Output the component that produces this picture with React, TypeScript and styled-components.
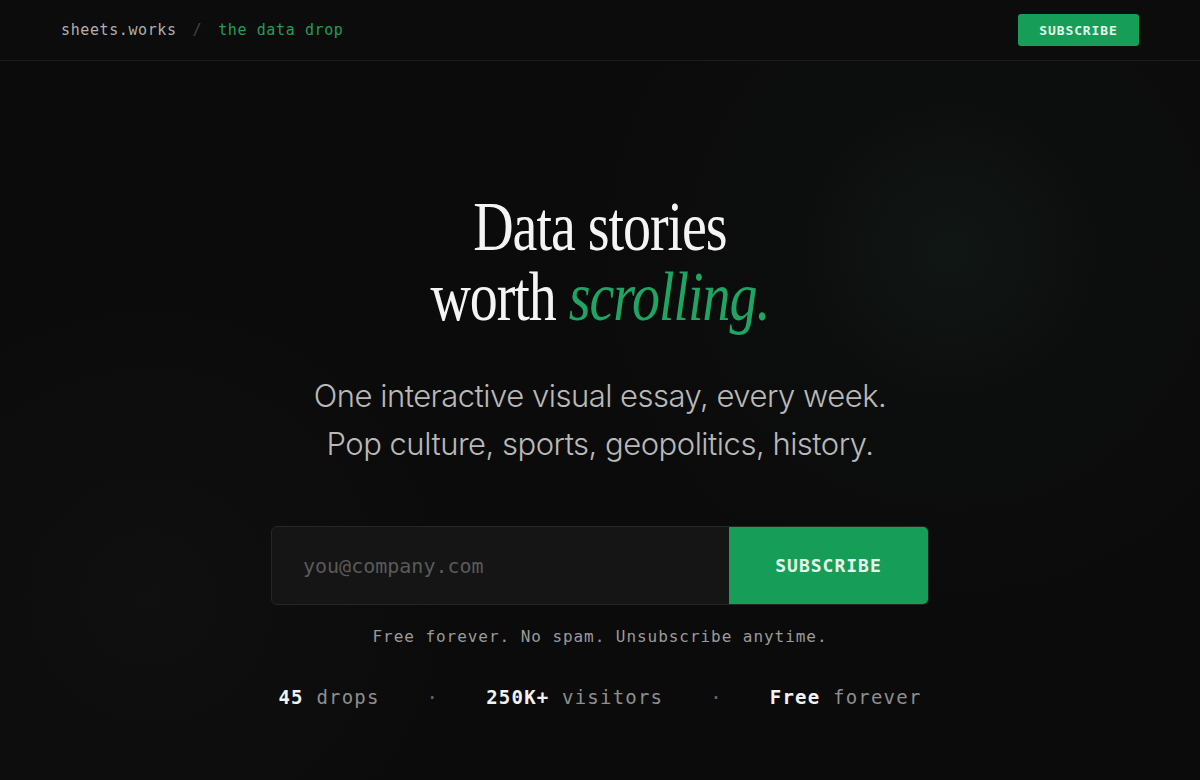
import React from 'react';
import styled, { createGlobalStyle } from 'styled-components';

const MONO = '"DejaVu Sans Mono", "Liberation Mono", monospace';
const SERIF = '"Liberation Serif", "DejaVu Serif", serif';
const SANS = 'Inter, "Noto Sans", sans-serif';
const GREEN = '#169e58';

const GlobalStyle = createGlobalStyle`
  html, body {
    margin: 0;
    padding: 0;
    background: #0b0b0b;
  }
  * { box-sizing: border-box; }
`;

const Page = styled.div`
  width: 1200px;
  height: 780px;
  overflow: hidden;
  display: flex;
  flex-direction: column;
  background:
    radial-gradient(circle at 950px 250px, rgba(28, 48, 40, 0.3) 0, rgba(20, 30, 26, 0.1) 180px, rgba(0, 0, 0, 0) 360px),
    radial-gradient(circle at 150px 600px, rgba(30, 30, 30, 0.25) 0, rgba(0, 0, 0, 0) 300px),
    #0b0b0b;
`;

const Header = styled.header`
  height: 61px;
  flex-shrink: 0;
  display: flex;
  align-items: center;
  justify-content: space-between;
  padding: 0 61px;
  border-bottom: 1px solid #1c1c1c;
  background: rgba(12, 12, 12, 0.8);
`;

const Brand = styled.div`
  display: flex;
  align-items: center;
  font-family: ${MONO};
  font-size: 15px;
  letter-spacing: 0.6px;
`;

const BrandPart = styled.span<{ $tone: 'site' | 'sep' | 'section' }>`
  color: ${p => (p.$tone === 'site' ? '#b0b0b0' : p.$tone === 'sep' ? '#444' : '#1f9e5e')};
  margin: ${p => (p.$tone === 'sep' ? '0 16px' : '0')};
`;

const SmallButton = styled.button`
  width: 121px;
  height: 32px;
  border: none;
  border-radius: 3px;
  background: ${GREEN};
  color: #e6f7ec;
  font-family: ${MONO};
  font-size: 13px;
  font-weight: 700;
  letter-spacing: 0.9px;
  cursor: pointer;
`;

const Hero = styled.main`
  flex: 1;
  display: flex;
  flex-direction: column;
  align-items: center;
  padding-top: 131px;
`;

const Headline = styled.h1`
  margin: 0;
  font-family: ${SERIF};
  font-weight: 400;
  font-size: 70px;
  line-height: 70px;
  letter-spacing: -1.3px;
  color: #f4f4f4;
  text-align: center;
  transform: scaleX(0.8);
`;

const Accent = styled.em`
  color: #1fa463;
  font-style: italic;
`;

const Lede = styled.p`
  margin: 40px 0 0;
  font-family: ${SANS};
  font-weight: 300;
  font-size: 31px;
  line-height: 48px;
  letter-spacing: -0.5px;
  color: #b9b9b9;
  text-align: center;
`;

const Form = styled.form`
  margin-top: 58px;
  width: 658px;
  height: 79px;
  display: flex;
  border: 1px solid #262626;
  border-radius: 6px;
  overflow: hidden;
  background: #151515;
`;

const EmailInput = styled.input`
  flex: 1;
  min-width: 0;
  border: none;
  outline: none;
  background: transparent;
  padding: 0 31px;
  font-family: ${MONO};
  font-size: 20px;
  color: #ddd;
  &::placeholder {
    color: #5a5a5a;
  }
`;

const BigButton = styled.button`
  width: 199px;
  border: none;
  background: ${GREEN};
  color: #e6f7ec;
  font-family: ${MONO};
  font-size: 18px;
  font-weight: 700;
  letter-spacing: 1px;
  cursor: pointer;
`;

const Note = styled.p`
  margin: 22px 0 0;
  font-family: ${MONO};
  font-size: 16px;
  letter-spacing: 0.95px;
  color: #9a9a9a;
`;

const Stats = styled.div`
  margin-top: 40px;
  display: flex;
  align-items: center;
  gap: 47px;
  font-family: ${MONO};
  font-size: 19px;
  letter-spacing: 1.2px;
`;

const Stat = styled.span`
  color: #8e8e8e;
`;

const StatValue = styled.b`
  color: #f2f2f2;
  font-weight: 700;
`;

const Dot = styled.span`
  color: #666;
`;

const stats = [
  { value: '45', label: 'drops' },
  { value: '250K+', label: 'visitors' },
  { value: 'Free', label: 'forever' },
];

export default function App() {
  return (
    <Page>
      <GlobalStyle />
      <Header>
        <Brand>
          <BrandPart $tone="site">sheets.works</BrandPart>
          <BrandPart $tone="sep">/</BrandPart>
          <BrandPart $tone="section">the data drop</BrandPart>
        </Brand>
        <SmallButton>SUBSCRIBE</SmallButton>
      </Header>
      <Hero>
        <Headline>
          Data stories
          <br />
          worth <Accent>scrolling.</Accent>
        </Headline>
        <Lede>
          One interactive visual essay, every week.
          <br />
          Pop culture, sports, geopolitics, history.
        </Lede>
        <Form onSubmit={e => e.preventDefault()}>
          <EmailInput type="email" placeholder="you@company.com" />
          <BigButton type="submit">SUBSCRIBE</BigButton>
        </Form>
        <Note>Free forever. No spam. Unsubscribe anytime.</Note>
        <Stats>
          {stats.map((s, i) => (
            <React.Fragment key={s.label}>
              {i > 0 && <Dot>·</Dot>}
              <Stat>
                <StatValue>{s.value}</StatValue> {s.label}
              </Stat>
            </React.Fragment>
          ))}
        </Stats>
      </Hero>
    </Page>
  );
}
